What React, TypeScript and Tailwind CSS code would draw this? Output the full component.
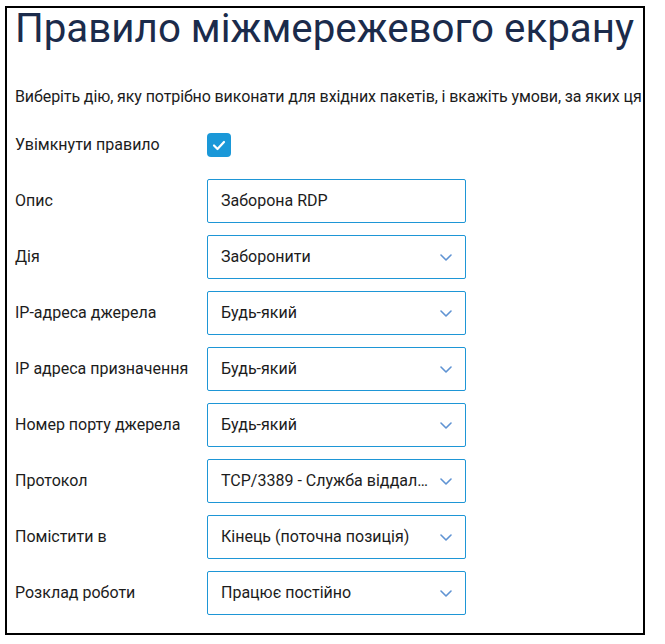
import React from "react";

const rows = [
  { label: "Опис", value: "Заборона RDP", select: false },
  { label: "Дія", value: "Заборонити", select: true },
  { label: "IP-адреса джерела", value: "Будь-який", select: true },
  { label: "IP адреса призначення", value: "Будь-який", select: true },
  { label: "Номер порту джерела", value: "Будь-який", select: true },
  {
    label: "Протокол",
    value: "TCP/3389 - Служба віддаленого робочого столу",
    select: true,
  },
  { label: "Помістити в", value: "Кінець (поточна позиція)", select: true },
  { label: "Розклад роботи", value: "Працює постійно", select: true },
];

const Chevron = () => (
  <svg width="12" height="7" viewBox="0 0 12 7" fill="none" className="shrink-0">
    <path
      d="M1 1 L6 6 L11 1"
      stroke="#5f93d3"
      strokeWidth="1.6"
      strokeLinecap="round"
      strokeLinejoin="round"
    />
  </svg>
);

const Field = ({ value, select }: { value: string; select: boolean }) => (
  <div className="flex items-center w-[259px] h-[44px] border border-[#1e96d6] rounded-[2px] pl-[13px] pr-[13px] bg-white">
    <span className="flex-1 min-w-0 truncate text-[16px] text-[#1c1c1c]">{value}</span>
    {select && (
      <span className="ml-3">
        <Chevron />
      </span>
    )}
  </div>
);

const App = () => {
  return (
    <div className="bg-white w-[665px] h-[644px] pl-[5px] pt-[6px]" style={{ fontFamily: "Roboto, 'Noto Sans', sans-serif" }}>
      <div className="w-[640px] h-[629px] border-2 border-black overflow-hidden px-2">
        <h1 className="mt-[1px] text-[40.3px] leading-[40px] font-normal text-[#1b2b4b] whitespace-nowrap">
          Правило міжмережевого екрану
        </h1>
        <p className="mt-[36px] text-[16px] tracking-[-0.1px] leading-6 text-[#1c1c1c] whitespace-nowrap">
          Виберіть дію, яку потрібно виконати для вхідних пакетів, і вкажіть умови, за яких ця дія виконуватиметься.
        </p>
        <div className="mt-[14px] flex flex-col gap-3">
          <div className="flex items-center h-[44px]">
            <span className="w-[192px] text-[16px] text-[#1c1c1c]">Увімкнути правило</span>
            <span className="flex items-center justify-center w-6 h-6 rounded-[4px] bg-[#1a98d8]">
              <svg width="14" height="11" viewBox="0 0 14 11" fill="none">
                <path
                  d="M2 5.5 L5.5 9 L12 2"
                  stroke="white"
                  strokeWidth="2.2"
                  strokeLinecap="round"
                  strokeLinejoin="round"
                />
              </svg>
            </span>
          </div>
          {rows.map((row) => (
            <div key={row.label} className="flex items-center h-[44px]">
              <span className="w-[192px] text-[16px] text-[#1c1c1c]">{row.label}</span>
              <Field value={row.value} select={row.select} />
            </div>
          ))}
        </div>
      </div>
    </div>
  );
};

export default App;
